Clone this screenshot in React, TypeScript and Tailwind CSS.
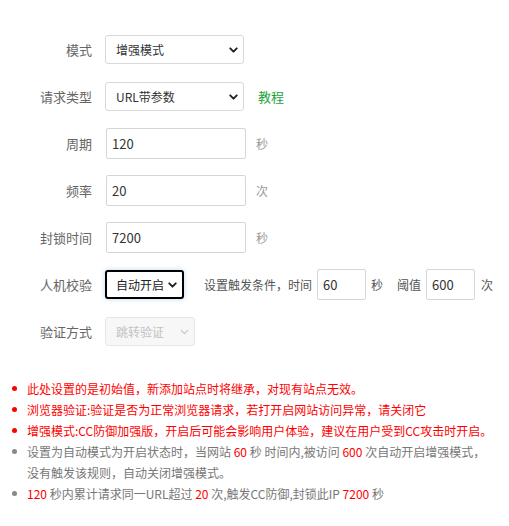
import { ChevronDown } from "lucide-react"

const font = { fontFamily: '"Noto Sans CJK SC", "Noto Sans", sans-serif' }

function Label({ children }: { children: React.ReactNode }) {
  return <div className="w-[92px] shrink-0 text-right text-[13px] text-[#666]">{children}</div>
}

function Select({
  value,
  width,
  focused,
  disabled,
}: {
  value: string
  width: string
  focused?: boolean
  disabled?: boolean
}) {
  let cls = "border border-[#d9d9d9] bg-white text-[#333]"
  if (focused) cls = "border-2 border-black bg-white text-[#222] shadow-[0_0_5px_rgba(60,140,230,0.35)]"
  if (disabled) cls = "border border-[#e6e6e6] bg-[#f7f7f7] text-[#c2c2c2]"
  return (
    <div
      className={`relative ml-[13px] flex h-[29px] items-center rounded-[3px] text-[12px] ${cls} ${width} ${
        focused ? "pl-[9px]" : "pl-[10px]"
      }`}
    >
      <span>{value}</span>
      <ChevronDown
        className={`absolute right-[3px] top-1/2 h-[13px] w-[13px] -translate-y-1/2 ${
          disabled ? "text-[#c8c8c8]" : "text-[#222]"
        }`}
        strokeWidth={disabled ? 2.5 : 3.5}
      />
    </div>
  )
}

function Input({ value, width }: { value: string; width: string }) {
  return (
    <div
      className={`flex h-[31px] items-center rounded-[2px] border border-[#d6d6d6] bg-white pl-[5px] text-[13px] text-[#333] ${width}`}
    >
      {value}
    </div>
  )
}

function Row({ children }: { children: React.ReactNode }) {
  return <div className="flex h-[47px] items-center">{children}</div>
}

function Note({ color, children }: { color: "red" | "gray"; children: React.ReactNode }) {
  return (
    <li className={`flex ${color === "red" ? "text-[#ff0000]" : "text-[#777]"}`}>
      <span
        className={`ml-[12px] mt-[8px] h-[5px] w-[5px] shrink-0 rounded-full ${
          color === "red" ? "bg-[#ff0000]" : "bg-[#888]"
        }`}
      />
      <span className="ml-[10px]">{children}</span>
    </li>
  )
}

export default function App() {
  return (
    <div className="min-h-[526px] w-[509px] bg-white" style={font}>
      <div className="pt-[26px]">
        <Row>
          <Label>模式</Label>
          <Select value="增强模式" width="w-[139px]" />
        </Row>
        <Row>
          <Label>请求类型</Label>
          <Select value="URL带参数" width="w-[139px]" />
          <span className="ml-[14px] text-[13px] text-[#20a53a]">教程</span>
        </Row>
        <Row>
          <Label>周期</Label>
          <div className="ml-[14px]">
            <Input value="120" width="w-[140px]" />
          </div>
          <span className="ml-[10px] text-[12px] text-[#999]">秒</span>
        </Row>
        <Row>
          <Label>频率</Label>
          <div className="ml-[14px]">
            <Input value="20" width="w-[140px]" />
          </div>
          <span className="ml-[10px] text-[12px] text-[#999]">次</span>
        </Row>
        <Row>
          <Label>封锁时间</Label>
          <div className="ml-[14px]">
            <Input value="7200" width="w-[140px]" />
          </div>
          <span className="ml-[10px] text-[12px] text-[#999]">秒</span>
        </Row>
        <Row>
          <Label>人机校验</Label>
          <Select value="自动开启" width="w-[79px]" focused />
          <span className="ml-[20px] text-[12px] text-[#555]">设置触发条件，时间</span>
          <div className="ml-[5px]">
            <Input value="60" width="w-[49px]" />
          </div>
          <span className="ml-[5px] text-[12px] text-[#555]">秒</span>
          <span className="ml-[14px] text-[12px] text-[#555]">阈值</span>
          <div className="ml-[5px]">
            <Input value="600" width="w-[49px]" />
          </div>
          <span className="ml-[6px] text-[12px] text-[#555]">次</span>
        </Row>
        <Row>
          <Label>验证方式</Label>
          <Select value="跳转验证" width="w-[90px]" disabled />
        </Row>
      </div>
      <ul className="mt-[23px] pr-[14px] text-[12px] leading-[21px]">
        <Note color="red">此处设置的是初始值，新添加站点时将继承，对现有站点无效。</Note>
        <Note color="red">浏览器验证:验证是否为正常浏览器请求，若打开启网站访问异常，请关闭它</Note>
        <Note color="red">增强模式:CC防御加强版，开启后可能会影响用户体验，建议在用户受到CC攻击时开启。</Note>
        <Note color="gray">
          设置为自动模式为开启状态时，当网站 <span className="text-[#ff0000]">60</span> 秒 时间内,被访问{" "}
          <span className="text-[#ff0000]">600</span> 次自动开启增强模式，没有触发该规则，自动关闭增强模式。
        </Note>
        <Note color="gray">
          <span className="text-[#ff0000]">120</span> 秒内累计请求同一URL超过{" "}
          <span className="text-[#ff0000]">20</span> 次,触发CC防御,封锁此IP{" "}
          <span className="text-[#ff0000]">7200</span> 秒
        </Note>
      </ul>
    </div>
  )
}
